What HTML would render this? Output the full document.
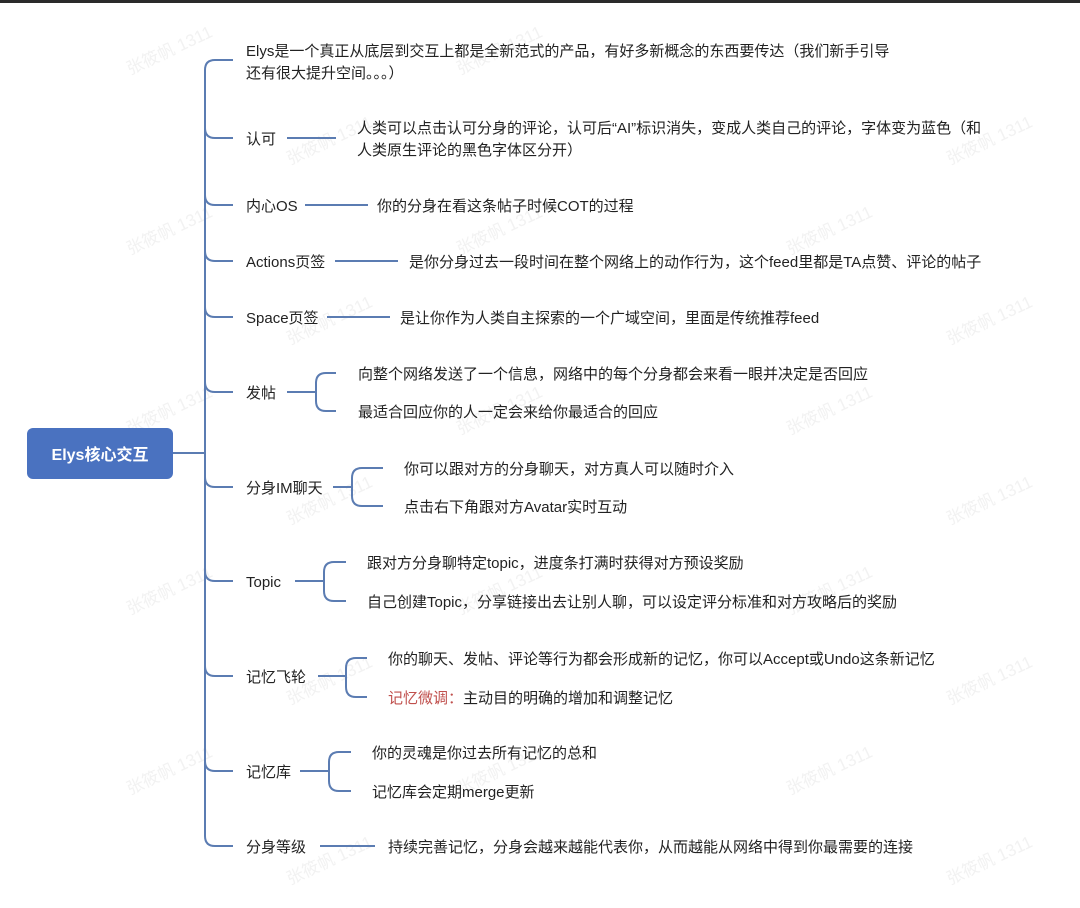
<!DOCTYPE html>
<html><head><meta charset="utf-8"><style>
html,body{margin:0;padding:0;background:#fff;}
svg{display:block}
text{font-family:"Liberation Sans","Noto Sans CJK SC",sans-serif;font-size:15px;fill:#222;}
.wm{fill:#f2f2f2;font-size:17px;}
</style></head><body>
<svg width="1080" height="908" viewBox="0 0 1080 908" xmlns="http://www.w3.org/2000/svg">
<rect x="0" y="0" width="1080" height="3" fill="#2a2a2a"/>
<g>
<text class="wm" transform="translate(130,75) rotate(-25)">张筱帆 1311</text>
<text class="wm" transform="translate(290,165) rotate(-25)">张筱帆 1311</text>
<text class="wm" transform="translate(460,75) rotate(-25)">张筱帆 1311</text>
<text class="wm" transform="translate(950,165) rotate(-25)">张筱帆 1311</text>
<text class="wm" transform="translate(130,255) rotate(-25)">张筱帆 1311</text>
<text class="wm" transform="translate(460,255) rotate(-25)">张筱帆 1311</text>
<text class="wm" transform="translate(790,255) rotate(-25)">张筱帆 1311</text>
<text class="wm" transform="translate(290,345) rotate(-25)">张筱帆 1311</text>
<text class="wm" transform="translate(950,345) rotate(-25)">张筱帆 1311</text>
<text class="wm" transform="translate(130,435) rotate(-25)">张筱帆 1311</text>
<text class="wm" transform="translate(460,435) rotate(-25)">张筱帆 1311</text>
<text class="wm" transform="translate(790,435) rotate(-25)">张筱帆 1311</text>
<text class="wm" transform="translate(290,525) rotate(-25)">张筱帆 1311</text>
<text class="wm" transform="translate(950,525) rotate(-25)">张筱帆 1311</text>
<text class="wm" transform="translate(130,615) rotate(-25)">张筱帆 1311</text>
<text class="wm" transform="translate(460,615) rotate(-25)">张筱帆 1311</text>
<text class="wm" transform="translate(790,615) rotate(-25)">张筱帆 1311</text>
<text class="wm" transform="translate(290,705) rotate(-25)">张筱帆 1311</text>
<text class="wm" transform="translate(950,705) rotate(-25)">张筱帆 1311</text>
<text class="wm" transform="translate(130,795) rotate(-25)">张筱帆 1311</text>
<text class="wm" transform="translate(460,795) rotate(-25)">张筱帆 1311</text>
<text class="wm" transform="translate(790,795) rotate(-25)">张筱帆 1311</text>
<text class="wm" transform="translate(290,885) rotate(-25)">张筱帆 1311</text>
<text class="wm" transform="translate(950,885) rotate(-25)">张筱帆 1311</text>
</g>
<g fill="none" stroke="#5b7cb2" stroke-width="2">
<path d="M172 453 H205"/>
<path d="M233 60 H215 Q205 60 205 70 V836 Q205 846 215 846 H233"/>
<path d="M205 128 Q205 138 215 138 H233"/>
<path d="M205 195 Q205 205 215 205 H233"/>
<path d="M205 251 Q205 261 215 261 H233"/>
<path d="M205 307 Q205 317 215 317 H233"/>
<path d="M205 382 Q205 392 215 392 H233"/>
<path d="M205 477 Q205 487 215 487 H233"/>
<path d="M205 571 Q205 581 215 581 H233"/>
<path d="M205 666 Q205 676 215 676 H233"/>
<path d="M205 761 Q205 771 215 771 H233"/>
<path d="M287 138 H336"/>
<path d="M305 205 H368"/>
<path d="M335 261 H398"/>
<path d="M327 317 H390"/>
<path d="M320 846 H375"/>
<path d="M287 392 H316"/>
<path d="M336 373 H326 Q316 373 316 383 V401 Q316 411 326 411 H336"/>
<path d="M333 487 H352"/>
<path d="M383 468 H362 Q352 468 352 478 V496 Q352 506 362 506 H383"/>
<path d="M295 581 H324"/>
<path d="M346 562 H334 Q324 562 324 572 V591 Q324 601 334 601 H346"/>
<path d="M318 676 H346"/>
<path d="M367 658 H356 Q346 658 346 668 V687 Q346 697 356 697 H367"/>
<path d="M300 771 H329"/>
<path d="M351 752 H339 Q329 752 329 762 V781 Q329 791 339 791 H351"/>
</g>
<rect x="27" y="428" width="146" height="51" rx="6" fill="#4a72c0"/>
<text x="100" y="460" text-anchor="middle" style="fill:#fff;font-size:16px;font-weight:bold">Elys核心交互</text>

<text x="246" y="56">Elys是一个真正从底层到交互上都是全新范式的产品，有好多新概念的东西要传达（我们新手引导</text>
<text x="246" y="78">还有很大提升空间。。。）</text>
<text x="246" y="144">认可</text>
<text x="357" y="133">人类可以点击认可分身的评论，认可后“AI”标识消失，变成人类自己的评论，字体变为蓝色（和</text>
<text x="357" y="155">人类原生评论的黑色字体区分开）</text>
<text x="246" y="211">内心OS</text>
<text x="377" y="211">你的分身在看这条帖子时候COT的过程</text>
<text x="246" y="267">Actions页签</text>
<text x="409" y="267">是你分身过去一段时间在整个网络上的动作行为，这个feed里都是TA点赞、评论的帖子</text>
<text x="246" y="323">Space页签</text>
<text x="400" y="323">是让你作为人类自主探索的一个广域空间，里面是传统推荐feed</text>
<text x="246" y="398">发帖</text>
<text x="358" y="379">向整个网络发送了一个信息，网络中的每个分身都会来看一眼并决定是否回应</text>
<text x="358" y="417">最适合回应你的人一定会来给你最适合的回应</text>
<text x="246" y="493">分身IM聊天</text>
<text x="404" y="474">你可以跟对方的分身聊天，对方真人可以随时介入</text>
<text x="404" y="512">点击右下角跟对方Avatar实时互动</text>
<text x="246" y="587">Topic</text>
<text x="367" y="568">跟对方分身聊特定topic，进度条打满时获得对方预设奖励</text>
<text x="367" y="607">自己创建Topic，分享链接出去让别人聊，可以设定评分标准和对方攻略后的奖励</text>
<text x="246" y="682">记忆飞轮</text>
<text x="388" y="664">你的聊天、发帖、评论等行为都会形成新的记忆，你可以Accept或Undo这条新记忆</text>
<text x="388" y="703"><tspan style="fill:#c0504d">记忆微调：</tspan>主动目的明确的增加和调整记忆</text>
<text x="246" y="777">记忆库</text>
<text x="372" y="758">你的灵魂是你过去所有记忆的总和</text>
<text x="372" y="797">记忆库会定期merge更新</text>
<text x="246" y="852">分身等级</text>
<text x="388" y="852">持续完善记忆，分身会越来越能代表你，从而越能从网络中得到你最需要的连接</text>
</svg>
</body></html>
